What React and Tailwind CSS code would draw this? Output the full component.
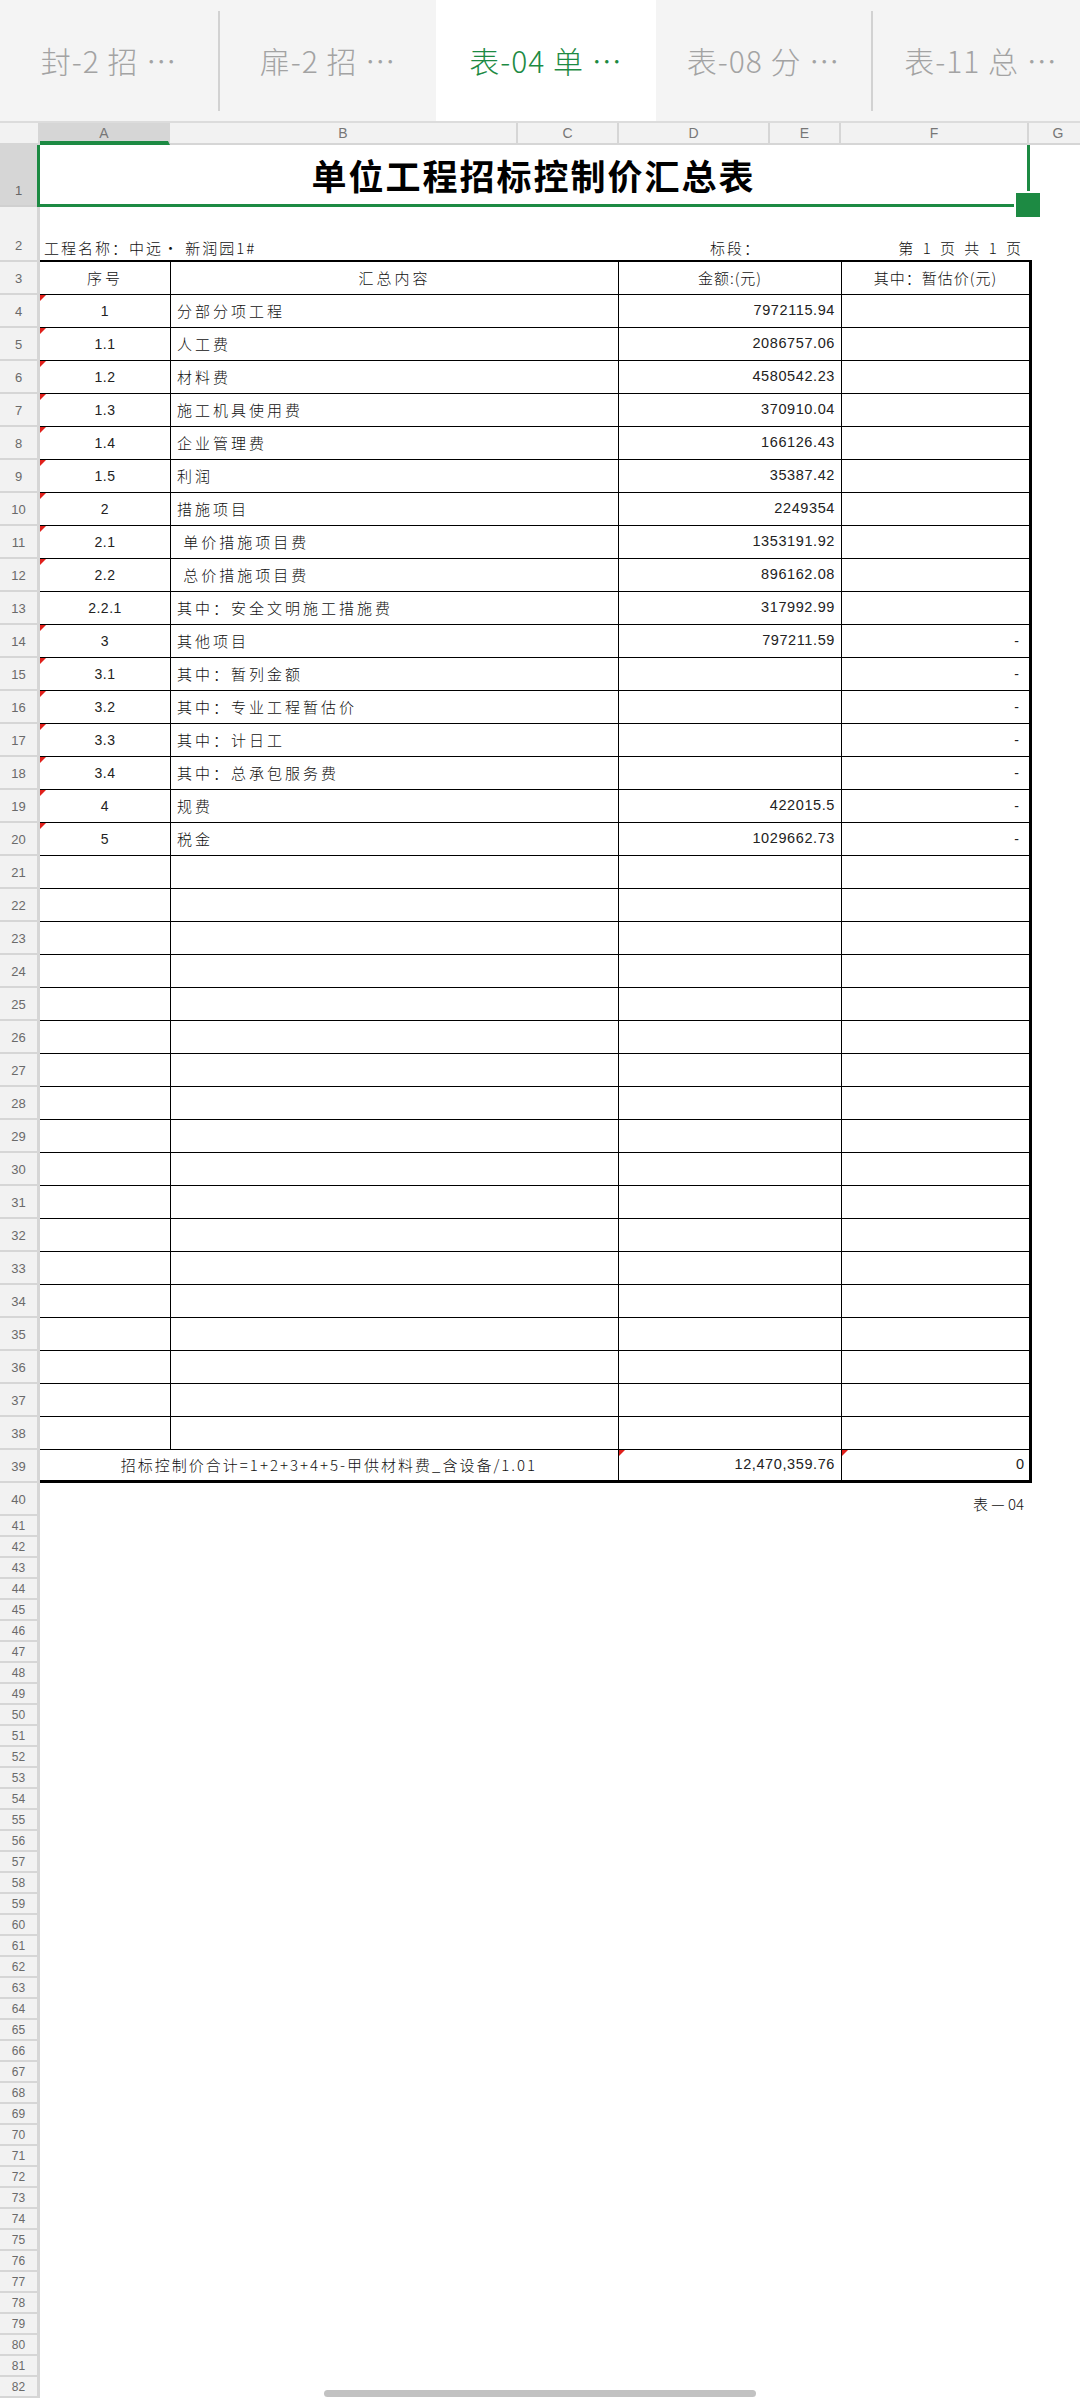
import React from 'react';

const cjk = "font-['Noto_Sans_CJK_SC',sans-serif]";
const num = "font-['Liberation_Sans','Noto_Sans_CJK_SC',sans-serif]";

const tabs = [
  { label: '封-2 招 …', w: 'w-[218px]', active: false },
  { label: '扉-2 招 …', w: 'w-[216px]', active: false },
  { label: '表-04 单 …', w: 'w-[220px]', active: true },
  { label: '表-08 分 …', w: 'w-[215px]', active: false },
  { label: '表-11 总 …', w: 'w-[216px]', active: false },
];

const cols = [
  { k: 'A', w: 'w-[130px]' },
  { k: 'B', w: 'w-[348px]' },
  { k: 'C', w: 'w-[101px]' },
  { k: 'D', w: 'w-[151px]' },
  { k: 'E', w: 'w-[71px]' },
  { k: 'F', w: 'w-[188px]' },
  { k: 'G', w: 'w-[60px]' },
];

// 序号, 汇总内容, 金额, 暂估价, 批注标记
const data = [
  ['1', '分部分项工程', '7972115.94', '', true],
  ['1.1', '人工费', '2086757.06', '', true],
  ['1.2', '材料费', '4580542.23', '', true],
  ['1.3', '施工机具使用费', '370910.04', '', true],
  ['1.4', '企业管理费', '166126.43', '', true],
  ['1.5', '利润', '35387.42', '', true],
  ['2', '措施项目', '2249354', '', true],
  ['2.1', '\u00a0单价措施项目费', '1353191.92', '', true],
  ['2.2', '\u00a0总价措施项目费', '896162.08', '', true],
  ['2.2.1', '其中：安全文明施工措施费', '317992.99', '', false],
  ['3', '其他项目', '797211.59', '-', true],
  ['3.1', '其中：暂列金额', '', '-', true],
  ['3.2', '其中：专业工程暂估价', '', '-', true],
  ['3.3', '其中：计日工', '', '-', true],
  ['3.4', '其中：总承包服务费', '', '-', true],
  ['4', '规费', '422015.5', '-', true],
  ['5', '税金', '1029662.73', '-', true],
];

const Flag = () => (
  <span className="absolute left-0 top-0 w-0 h-0 border-t-[6px] border-r-[6px] border-t-[#e0201b] border-r-transparent" />
);

const RowHead = ({ n, small }) =>
  small ? (
    <div className={`w-[40px] shrink-0 h-full border-r-[3px] border-b-2 border-[#d6d6d6] bg-[#f2f2f2] flex items-center justify-center text-[12px] leading-[16px] text-[#6a6a6a] ${num}`}>
      {n}
    </div>
  ) : (
    <div className={`w-[40px] shrink-0 h-full border-r-[3px] border-b-2 border-[#d6d6d6] bg-[#f2f2f2] flex items-end justify-center pb-[5px] text-[13px] leading-[18px] text-[#6a6a6a] ${num}`}>
      {n}
    </div>
  );

const DataRow = ({ n, row }) => {
  const [seq, name, amount, est, flag] = row || ['', '', '', '', false];
  return (
    <div className="flex h-[33px]">
      <RowHead n={n} />
      <div className="flex w-[992px] border-b border-black text-[#222]">
        <div className={`relative w-[131px] border-r border-black flex items-center justify-center text-[14px] tracking-[0.5px] ${num}`}>
          {flag && <Flag />}
          {seq}
        </div>
        <div className={`w-[448px] border-r border-black flex items-center pl-[6px] text-[15px] tracking-[3px] font-light text-[#111] ${cjk}`}>
          {name}
        </div>
        <div className={`w-[223px] border-r border-black flex items-center justify-end pr-[6px] text-[14.5px] tracking-[0.6px] ${num}`}>
          {amount}
        </div>
        <div className={`w-[190px] border-r-[3px] border-black flex items-center justify-end pr-[10px] text-[14px] ${num}`}>
          {est}
        </div>
      </div>
    </div>
  );
};

export default function App() {
  const blanks = [];
  for (let i = 21; i <= 38; i++) blanks.push(i);
  const tail = [];
  for (let i = 41; i <= 82; i++) tail.push(i);

  return (
    <div className={`relative w-[1080px] h-[2400px] overflow-hidden bg-white ${cjk}`}>
      {/* sheet tabs */}
      <div className="flex items-center h-[123px] bg-[#f4f4f4] border-b-2 border-[#dcdcdc] overflow-hidden">
        {tabs.map((t, i) => (
          <React.Fragment key={t.label}>
            <div
              className={`${t.w} shrink-0 h-full flex items-center justify-center text-[30px] font-light tracking-[1px] ${
                t.active ? 'bg-white text-[#1d8a43]' : 'text-[#a3a3a3]'
              }`}
            >
              {t.label}
            </div>
            {(i === 0 || i === 3) && <div className="w-[2px] h-[100px] shrink-0 bg-[#d2d2d2]" />}
          </React.Fragment>
        ))}
      </div>

      {/* column header */}
      <div className={`flex h-[22px] text-[14px] leading-[18px] text-[#777] ${num}`}>
        <div className="w-[40px] shrink-0 bg-[#f2f2f2] border-r-2 border-b-2 border-[#d6d6d6]" />
        {cols.map((c) => (
          <div
            key={c.k}
            className={`${c.w} shrink-0 flex justify-center pt-[1px] border-r-2 ${
              c.k === 'A'
                ? 'bg-[#d6d6d6] border-[#d6d6d6] border-b-4 border-b-[#1d8a43]'
                : 'bg-[#f2f2f2] border-[#d6d6d6] border-b-2'
            }`}
          >
            {c.k}
          </div>
        ))}
      </div>

      {/* row 1 : title, selected */}
      <div className="flex h-[62px]">
        <div className={`w-[37px] shrink-0 bg-[#d6d6d6] border-b-2 border-[#d0d0d0] flex items-end justify-center pb-[5px] text-[13px] leading-[18px] text-[#666] ${num}`}>
          1
        </div>
        <div className="w-[993px] border-l-[3px] border-r-[3px] border-b-[3px] border-[#1d8a43] flex items-center justify-center pt-[2px] text-[35px] font-bold tracking-[2px] text-black">
          单位工程招标控制价汇总表
        </div>
      </div>

      {/* row 2 */}
      <div className="flex h-[55px]">
        <RowHead n="2" />
        <div className="flex items-end w-[992px] border-b-2 border-black pb-[2px] text-[15px] leading-[20px] tracking-[2px] font-light text-[#111]">
          <div className="w-[670px] pl-[4px]">工程名称：中远·&nbsp;新润园1#</div>
          <div className="w-[150px]">标段：</div>
          <div className="flex-1 text-right pr-[8px] tracking-[3px]">第 1 页&nbsp;共 1 页</div>
        </div>
      </div>

      {/* row 3 : header */}
      <div className="flex h-[33px]">
        <RowHead n="3" />
        <div className="flex w-[992px] border-b border-black text-[15px] tracking-[3px] font-light text-[#111]">
          <div className="w-[131px] border-r border-black flex items-center justify-center">序号</div>
          <div className="w-[448px] border-r border-black flex items-center justify-center">汇总内容</div>
          <div className="w-[223px] border-r border-black flex items-center justify-center tracking-[1px]">金额:(元)</div>
          <div className="w-[190px] border-r-[3px] border-black flex items-center justify-center tracking-[1px]">其中：暂估价(元)</div>
        </div>
      </div>

      {data.map((r, i) => (
        <DataRow key={i} n={String(i + 4)} row={r} />
      ))}
      {blanks.map((n) => (
        <DataRow key={n} n={String(n)} />
      ))}

      {/* row 39 : total */}
      <div className="flex h-[33px]">
        <RowHead n="39" />
        <div className="flex w-[992px] border-b-[3px] border-black text-[#222]">
          <div className="w-[579px] border-r border-black flex items-center justify-center text-[15px] tracking-[2px] font-light text-[#111]">
            招标控制价合计=1+2+3+4+5-甲供材料费_含设备/1.01
          </div>
          <div className={`relative w-[223px] border-r border-black flex items-center justify-end pr-[6px] text-[14.5px] tracking-[0.6px] ${num}`}>
            <Flag />
            12,470,359.76
          </div>
          <div className={`relative w-[190px] border-r-[3px] border-black flex items-center justify-end pr-[5px] text-[14.5px] ${num}`}>
            <Flag />
            0
          </div>
        </div>
      </div>

      {/* row 40 */}
      <div className="flex h-[33px]">
        <RowHead n="40" />
        <div className="flex items-end justify-end w-[992px] pr-[8px] pb-[1px] text-[15px] font-light text-[#111]">
          表 — 04
        </div>
      </div>

      {tail.map((n) => (
        <div key={n} className="flex h-[21px]">
          <RowHead n={String(n)} small />
        </div>
      ))}

      {/* fill handle */}
      <div className="absolute left-[1014px] top-[191px] w-[28px] h-[28px] bg-[#1d8a43] border-2 border-white" />

      {/* scroll indicator */}
      <div className="absolute left-[324px] top-[2390px] w-[432px] h-[7px] rounded-full bg-[#c2c2c2]" />
    </div>
  );
}
